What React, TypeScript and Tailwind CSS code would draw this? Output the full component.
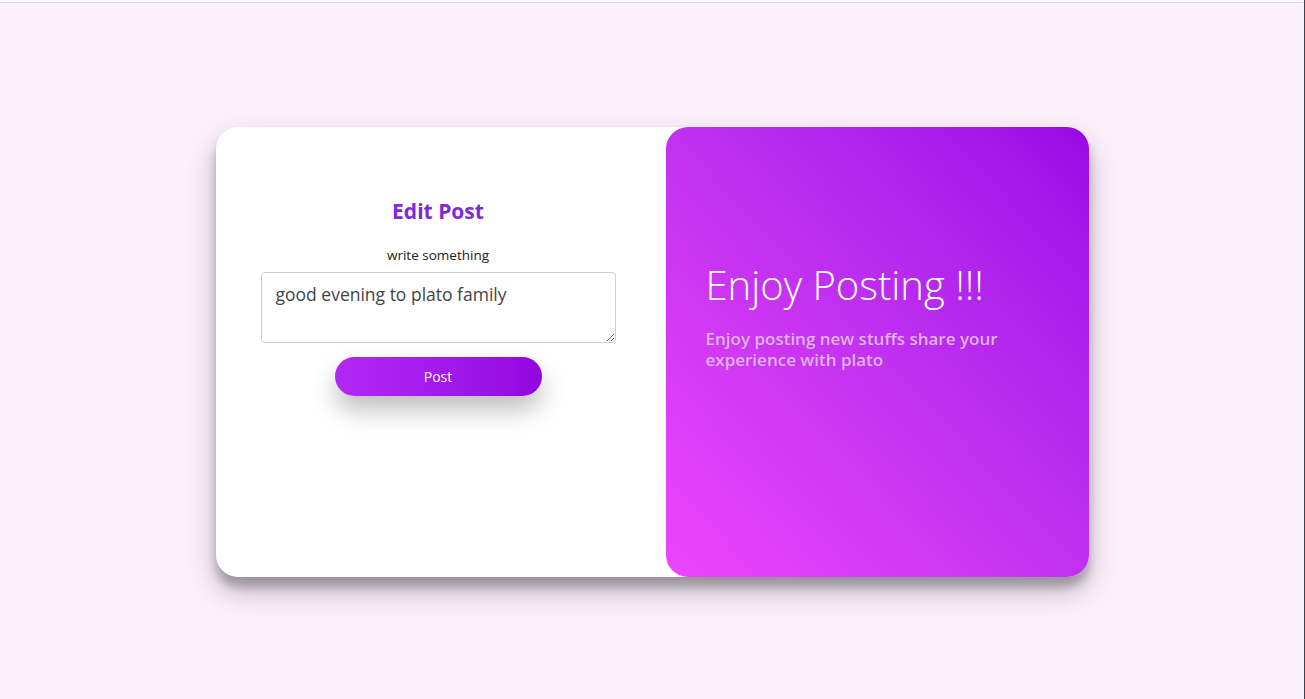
import React from "react";

export default function App() {
  return (
    <div
      className="flex h-[699px] w-full flex-col overflow-hidden border-r border-[#3a4252] bg-[#fcf0fd]"
      style={{ fontFamily: '"Open Sans", "Noto Sans", sans-serif' }}
    >
      <div className="h-[3px] shrink-0 border-b border-[#dcd8e0] bg-[#fdf8fd]" />
      <div className="flex flex-1 items-center justify-center pt-[2px]">
        <div className="flex h-[450px] w-[873px] rounded-[22px] bg-white shadow-[0_14px_28px_rgba(0,0,0,0.25),0_10px_10px_rgba(0,0,0,0.22)]">
          {/* left: form */}
          <div className="flex w-[450px] flex-col items-center pr-[5px] pt-[69px]">
            <h1 className="text-[21px] font-bold text-[#7d2ad8]">Edit Post</h1>
            <label className="mt-[17px] text-[13.5px] text-[#222]">write something</label>
            <textarea
              defaultValue="good evening to plato family"
              className="mt-[7px] h-[71px] w-[355px] rounded-[4px] border border-[#cfcfcf] px-[14px] py-[8px] text-[17.5px] text-[#444] outline-none"
            />
            <button className="mt-[14px] h-[39px] w-[207px] rounded-full bg-gradient-to-r from-[#b327f4] to-[#9205e1] text-[14px] text-white shadow-[0_14px_24px_rgba(0,0,0,0.25)]">
              Post
            </button>
          </div>
          {/* right: banner */}
          <div className="flex-1 rounded-[22px] bg-gradient-to-tr from-[#ec46fb] to-[#9a05e6] px-[40px] pt-[133px] text-white">
            <h2 className="text-[40px] font-light leading-tight">Enjoy Posting !!!</h2>
            <p className="mt-[18px] text-[17px] font-semibold leading-[21px] text-[#dcb3ea]">
              Enjoy posting new stuffs share your experience with plato
            </p>
          </div>
        </div>
      </div>
    </div>
  );
}
